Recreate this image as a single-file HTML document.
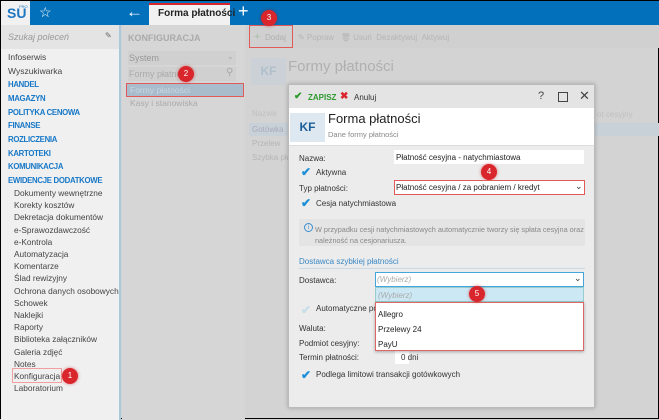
<!DOCTYPE html>
<html><head><meta charset="utf-8"><style>
*{box-sizing:border-box;margin:0;padding:0}
body{width:659px;height:419px;overflow:hidden;font-family:"Liberation Sans",sans-serif;font-size:9px;color:#333;position:relative;background:#d3d3d3;border:1px solid #000}
.a{position:absolute;white-space:nowrap}
.badge{position:absolute;width:16px;height:16px;border-radius:50%;background:#d9262c;color:#fff;font-size:8px;text-align:center;line-height:16px;box-shadow:0 0 3px rgba(200,0,0,.5)}
.rb{position:absolute;border:1.5px solid #e05a5a}
.chk{position:absolute;width:12px;height:12px;color:#1a8fd8;font-size:12px;line-height:12px;font-weight:bold}
.up{color:#1778c7;font-weight:bold;font-size:7.8px;letter-spacing:-0.3px}
</style></head><body>
<!-- top bar -->
<div class="a" style="left:0;top:0;width:659px;height:24px;background:#0270ba"></div>
<div class="a" style="left:0;top:0;width:29px;height:24px;background:#f1f1f1"></div>
<div class="a" style="left:6px;top:4px;font-size:14px;font-weight:bold;color:#1d77c2">SU</div>
<div class="a" style="left:18px;top:3px;font-size:4px;color:#1d77c2">PRO</div>
<div class="a" style="left:38px;top:3px;font-size:14px;color:#fff">☆</div>
<div class="a" style="left:125px;top:1px;font-size:17px;color:#fff">←</div>
<div class="a" style="left:148px;top:2px;width:81px;height:22px;background:#f1f1f1;border-top:2px solid #d9262c"></div>
<div class="a" style="left:157px;top:7px;font-size:10px;color:#222;font-weight:bold">Forma płatności</div>
<div class="a" style="left:237px;top:0px;font-size:18px;color:#fff">+</div>
<!-- sidebar -->
<div class="a" style="left:0;top:24px;width:120px;height:395px;background:#f0f0f0;border-right:2px solid #a9c8dc"></div>
<div class="a" style="left:0;top:24px;width:118px;height:24px;background:#e4e4e4"></div>
<div class="a" style="left:7px;top:31px;font-style:italic;color:#999;font-size:9px">Szukaj poleceń</div>
<div class="a" style="left:104px;top:30px;color:#666;font-size:8px">✎</div>
<div class="a" style="left:7px;top:50px;line-height:13.65px;font-size:8.5px;color:#444">
Infoserwis<br>Wyszukiwarka<br>
<span class="up">HANDEL<br>MAGAZYN<br>POLITYKA CENOWA<br>FINANSE<br>ROZLICZENIA<br>KARTOTEKI<br>KOMUNIKACJA<br>EWIDENCJE DODATKOWE</span></div>
<div class="a" style="left:13px;top:186px;line-height:12.2px;font-size:8.3px;color:#444">
Dokumenty wewnętrzne<br>Korekty kosztów<br>Dekretacja dokumentów<br>e-Sprawozdawczość<br>e-Kontrola<br>Automatyzacja<br>Komentarze<br>Ślad rewizyjny<br>Ochrona danych osobowych<br>Schowek<br>Naklejki<br>Raporty<br>Biblioteka załączników<br>Galeria zdjęć<br>Notes<br>Konfiguracja<br>Laboratorium</div>
<div class="rb" style="left:11px;top:367px;width:50px;height:15px;border-color:#f0a0a0"></div>
<div class="badge" style="left:61px;top:367px">1</div>
<!-- middle panel -->
<div class="a" style="left:121px;top:24px;width:123px;height:395px;background:#d6d6d6"></div>
<div class="a" style="left:127px;top:32px;font-weight:bold;color:#aaa;font-size:9px">KONFIGURACJA</div>
<div class="a" style="left:127px;top:50px;width:108px;height:14px;background:#d0d0d0"></div>
<div class="a" style="left:128px;top:52px;color:#999;font-size:9px">System</div>
<div class="a" style="left:226px;top:51px;color:#aaa;font-size:8px">⌄</div>
<div class="a" style="left:127px;top:66px;width:108px;height:14px;background:#d0d0d0"></div>
<div class="a" style="left:128px;top:68px;color:#aaa;font-size:9px">Formy płatności</div>
<div class="a" style="left:225px;top:66px;color:#aaa;font-size:10px">⚲</div>
<div class="a" style="left:126px;top:83px;width:116px;height:12px;background:#a9bccb"></div>
<div class="a" style="left:129px;top:84px;color:#c9d6e0;font-size:8.5px">Formy płatności</div>
<div class="rb" style="left:125px;top:82px;width:118px;height:14px"></div>
<div class="a" style="left:129px;top:97px;color:#aaa;font-size:8.5px">Kasy i stanowiska</div>
<div class="badge" style="left:177px;top:65px">2</div>
<!-- main -->
<div class="a" style="left:245px;top:24px;width:414px;height:23px;background:#d0d0d0"></div>
<div class="a" style="left:253px;top:30px;color:#a9bfa9;font-size:11px">+</div>
<div class="a" style="left:264px;top:32px;color:#b0b0b0;font-size:8px">Dodaj</div>
<div class="rb" style="left:248px;top:24px;width:44px;height:23px"></div>
<div class="a" style="left:297px;top:32px;color:#b5b5b5;font-size:8px">✎ Popraw &nbsp; 🗑 Usuń &nbsp;Dezaktywuj &nbsp;Aktywuj</div>
<div class="badge" style="left:260px;top:9px">3</div>
<div class="a" style="left:250px;top:57px;width:35px;height:27px;background:#cbd1d6;color:#b0bfcc;font-size:12px;font-weight:bold;text-align:center;line-height:27px">KF</div>
<div class="a" style="left:287px;top:57px;color:#b0b0b0;font-size:15px">Formy płatności</div>
<div class="a" style="left:251px;top:108px;color:#c0c0c0;font-size:8px">Nazwa</div>
<div class="a" style="left:248px;top:122px;width:411px;height:13px;background:#c8d1d8"></div>
<div class="a" style="left:251px;top:124px;color:#aab;font-size:8px">Gotówka</div>
<div class="a" style="left:251px;top:138px;color:#b5b5b5;font-size:8px">Przelew</div>
<div class="a" style="left:251px;top:152px;color:#b5b5b5;font-size:8px">Szybka płat</div>
<div class="a" style="left:596px;top:109px;color:#c0c0c0;font-size:8px">ot cesyjny</div>
<!-- dialog -->
<div class="a" style="left:287px;top:83px;width:307px;height:324px;background:#ececec;border:1px solid #bbb;box-shadow:0 0 4px rgba(0,0,0,.25)"></div>
<div class="a" style="left:288px;top:84px;width:305px;height:23px;background:#e4e4e4"></div>
<div class="a" style="left:293px;top:90px;color:#2e9a2e;font-size:10px;font-weight:bold">✔</div>
<div class="a" style="left:307px;top:92px;color:#2e9a2e;font-size:8px;font-weight:bold">ZAPISZ</div>
<div class="a" style="left:339px;top:90px;color:#d9262c;font-size:10px;font-weight:bold">✖</div>
<div class="a" style="left:353px;top:92px;color:#333;font-size:8px">Anuluj</div>
<div class="a" style="left:537px;top:89px;color:#444;font-size:11px">?</div>
<div class="a" style="left:557px;top:91px;width:10px;height:10px;border:1.5px solid #444"></div>
<div class="a" style="left:578px;top:87px;color:#444;font-size:13px">✕</div>
<div class="a" style="left:288px;top:107px;width:305px;height:38px;background:#fff;border-bottom:1px solid #ddd"></div>
<div class="a" style="left:289px;top:112px;width:35px;height:29px;background:#dde8f0;color:#1d5f99;font-size:12px;font-weight:bold;text-align:center;line-height:29px">KF</div>
<div class="a" style="left:327px;top:110px;color:#222;font-size:13px">Forma płatności</div>
<div class="a" style="left:327px;top:129px;color:#888;font-size:7.5px">Dane formy płatności</div>
<div class="a" style="left:298px;top:153px;font-size:8px">Nazwa:</div>
<div class="a" style="left:393px;top:149px;width:190px;height:14px;background:#fff"></div>
<div class="a" style="left:395px;top:152px;font-size:8px;color:#222">Płatność cesyjna - natychmiastowa</div>
<div class="chk" style="left:300px;top:165px">✔</div>
<div class="a" style="left:315px;top:167px;font-size:8px">Aktywna</div>
<div class="badge" style="left:480px;top:163px">4</div>
<div class="a" style="left:298px;top:183px;font-size:8px">Typ płatności:</div>
<div class="a" style="left:393px;top:179px;width:191px;height:15px;background:#fff;border:1.5px solid #e05a5a"></div>
<div class="a" style="left:395px;top:182px;font-size:8px;color:#222">Płatność cesyjna / za pobraniem / kredyt</div>
<div class="a" style="left:574px;top:180px;font-size:9px">⌄</div>
<div class="chk" style="left:300px;top:196px">✔</div>
<div class="a" style="left:315px;top:198px;font-size:8px">Cesja natychmiastowa</div>
<div class="a" style="left:298px;top:218px;width:286px;height:27px;background:#e4e4e4"></div>
<div class="a" style="left:303px;top:222px;width:9px;height:9px;border:1px solid #3b8fd0;border-radius:50%;color:#3b8fd0;font-size:6px;text-align:center;line-height:8px">i</div>
<div class="a" style="left:314px;top:223px;font-size:7.3px;color:#888;line-height:11px">W przypadku cesji natychmiastowych automatycznie tworzy się spłata cesyjna oraz<br>należność na cesjonariusza.</div>
<div class="a" style="left:298px;top:256px;font-size:8px;color:#3a88c4">Dostawca szybkiej płatności</div>
<div class="a" style="left:298px;top:267px;width:286px;height:1px;background:#c9d9e6"></div>
<div class="a" style="left:298px;top:275px;font-size:8px">Dostawca:</div>
<div class="a" style="left:374px;top:271px;width:209px;height:15px;background:#fff;border:1.5px solid #45a6dd"></div>
<div class="a" style="left:376px;top:274px;font-size:8px;color:#aaa;font-style:italic">(Wybierz)</div>
<div class="a" style="left:573px;top:272px;font-size:9px">⌄</div>
<div class="chk" style="left:300px;top:303px;color:#c6ddea">✔</div>
<div class="a" style="left:315px;top:303px;font-size:8px">Automatyczne pob</div>
<div class="a" style="left:298px;top:323px;font-size:8px">Waluta:</div>
<div class="a" style="left:298px;top:338px;font-size:8px">Podmiot cesyjny:</div>
<div class="a" style="left:298px;top:352px;font-size:8px">Termin płatności:</div>
<div class="a" style="left:394px;top:349px;width:14px;height:14px;background:#fff"></div>
<div class="a" style="left:400px;top:352px;font-size:8px">0 dni</div>
<div class="chk" style="left:300px;top:368px">✔</div>
<div class="a" style="left:315px;top:369px;font-size:8px">Podlega limitowi transakcji gotówkowych</div>
<!-- dropdown -->
<div class="a" style="left:374px;top:286px;width:209px;height:15px;background:#cde8f5;border:1px solid #9cc"></div>
<div class="a" style="left:377px;top:290px;font-size:8px;color:#aaa;font-style:italic">(Wybierz)</div>
<div class="a" style="left:374px;top:301px;width:209px;height:49px;background:#fff;border:1.5px solid #d66;box-shadow:0 1px 3px rgba(0,0,0,.3)"></div>
<div class="a" style="left:377px;top:306px;font-size:8px;color:#222;line-height:15px">Allegro<br>Przelewy 24<br>PayU</div>
<div class="badge" style="left:468px;top:285px">5</div>
</body></html>
